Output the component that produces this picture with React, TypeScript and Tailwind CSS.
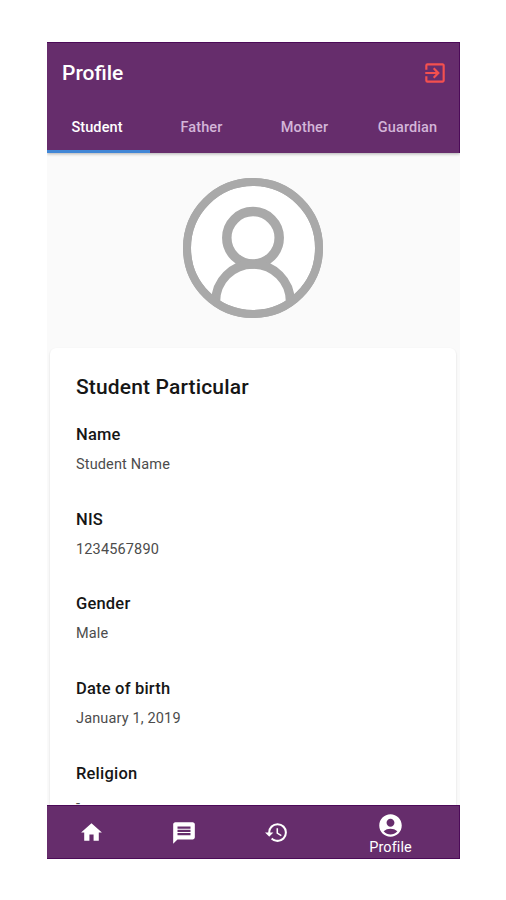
import React from 'react';
import { MdAccountCircle, MdExitToApp, MdHistory, MdHome, MdMessage } from 'react-icons/md';

const TABS = ['Student', 'Father', 'Mother', 'Guardian'];

const FIELDS = [
  { label: 'Name', value: 'Student Name' },
  { label: 'NIS', value: '1234567890' },
  { label: 'Gender', value: 'Male' },
  { label: 'Date of birth', value: 'January 1, 2019' },
  { label: 'Religion', value: '-' },
];

const Avatar = () => (
  <svg width="140" height="140" viewBox="0 0 140 140" fill="none" stroke="#a9a9a9">
    <clipPath id="avatar-clip">
      <circle cx="70" cy="70" r="68" />
    </clipPath>
    <circle cx="70" cy="70" r="66" fill="#fff" strokeWidth="8" />
    <g clipPath="url(#avatar-clip)">
      <circle cx="70" cy="59.8" r="26.2" strokeWidth="9.5" />
      <path d="M32.7 128V123.5a37.3 37.3 0 0 1 74.6 0V128" strokeWidth="9" />
    </g>
    <circle cx="70" cy="70" r="66" strokeWidth="8" />
  </svg>
);

const Header = () => (
  <header className="relative z-10 h-[111px] shrink-0 border-t border-r border-[#4c0a58] bg-[#662d6c] shadow-[0_1px_3px_rgba(0,0,0,0.3)] flex flex-col">
    <div className="flex-1 flex items-center justify-between pl-[15px] pr-[11px]">
      <h1 className="pt-[2px] text-[21px] font-medium text-white">Profile</h1>
      <button>
        <MdExitToApp size={26} color="#f4504f" />
      </button>
    </div>
    <nav className="flex h-[50px]">
      {TABS.map((tab, i) => (
        <button
          key={tab}
          className={`w-1/4 pt-[2px] text-[14.5px] tracking-[0.1px] font-medium border-b-[3px] ${i === 0 ? 'pr-[3px] text-white border-[#4287d6]' : 'text-[#d3b5d8] border-transparent'}`}
        >
          {tab}
        </button>
      ))}
    </nav>
  </header>
);

const BottomNav = () => (
  <nav className="relative z-10 flex h-[54px] shrink-0 border-t border-r border-b border-[#4c0a58] bg-[#662d6c] text-white">
    <button className="w-[89px] flex items-center justify-center"><MdHome size={25} /></button>
    <button className="w-[95px] flex items-center justify-center pt-px"><MdMessage size={26} /></button>
    <button className="w-[91px] flex items-center justify-center pt-px"><MdHistory size={25} /></button>
    <button className="flex-1 flex flex-col items-center pt-[6px]">
      <MdAccountCircle size={27} />
      <span className="text-[14.5px] tracking-[0.1px] leading-[17px]">Profile</span>
    </button>
  </nav>
);

export default function App() {
  return (
    <div className="h-[900px] bg-white pl-[47px] pt-[42px] font-['Roboto',sans-serif]">
      <div className="flex h-[817px] w-[413px] flex-col overflow-hidden">
        <Header />
        <main className="flex-1 min-h-0 overflow-hidden bg-[#fafafa]">
          <div className="flex justify-center pt-[25px] pb-[30px] pr-[2px]">
            <Avatar />
          </div>
          <section className="ml-[3px] mr-[4px] h-[600px] rounded-md bg-white px-[26px] pt-[24px] shadow-[0_1px_2px_rgba(0,0,0,0.16)]">
            <h2 className="mb-[21px] text-[21px] tracking-[0.15px] leading-[30px] font-medium text-[#161616]">Student Particular</h2>
            {FIELDS.map(f => (
              <div key={f.label} className="h-[84.7px]">
                <h3 className="text-[16.5px] tracking-[0.2px] leading-[24px] font-medium text-[#161616]">{f.label}</h3>
                <p className="mt-[8px] text-[14.5px] tracking-[0.15px] leading-[20px] text-[#4c4c4c]">{f.value}</p>
              </div>
            ))}
          </section>
        </main>
        <BottomNav />
      </div>
    </div>
  );
}
